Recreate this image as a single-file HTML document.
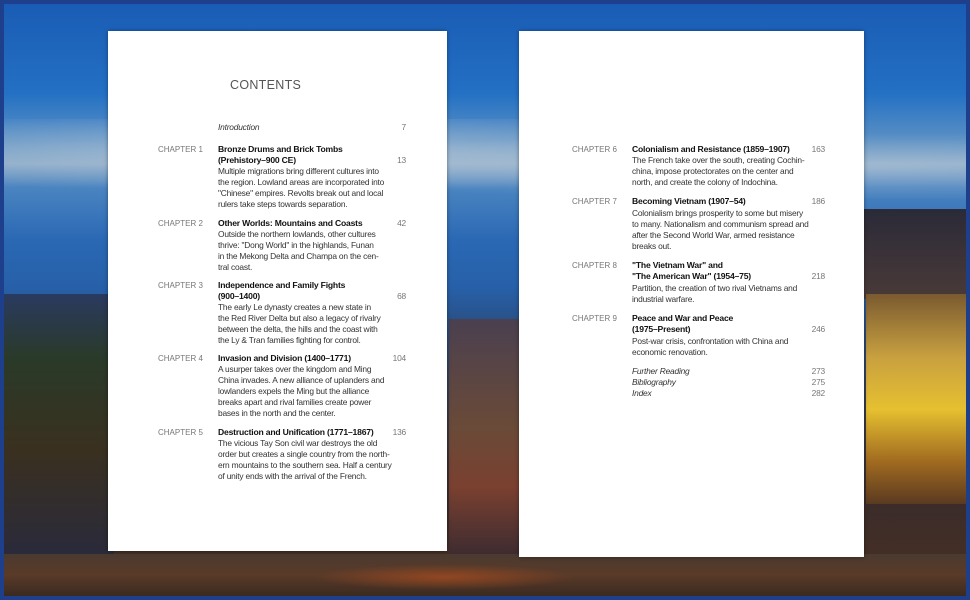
<!DOCTYPE html>
<html><head><meta charset="utf-8"><style>
*{margin:0;padding:0;box-sizing:border-box}
body{width:970px;height:600px;overflow:hidden;position:relative;background:#1d3f8c;font-family:"Liberation Sans",sans-serif}
.bg{position:absolute;left:4px;top:4px;width:962px;height:592px;overflow:hidden;
background:linear-gradient(180deg,#1a5cb5 0%,#2370c4 15%,#5a90c4 23%,#86a8c8 27%,#4a84c0 31%,#2a68b4 40%,#2760a8 48%,#2a4a7a 56%,#3a3a48 70%,#3b2c2a 85%,#4a3020 100%)}
.b{position:absolute}
.page{position:absolute;background:#fff;box-shadow:0 0 4px rgba(0,0,0,.4)}
.t{position:absolute;white-space:nowrap;font-size:8.4px;line-height:11px;color:#333;letter-spacing:-0.2px}
.c{color:#777;font-size:8px;letter-spacing:0}
.h{font-weight:bold;color:#111;font-size:8.6px}
.n{color:#777;text-align:right;width:30px}
i{font-style:italic}
</style></head><body>
<div class="bg">
 <div class="b" style="left:0;top:115px;width:962px;height:80px;background:radial-gradient(ellipse at 30% 40%,rgba(210,215,220,.5),transparent 60%),radial-gradient(ellipse at 90% 60%,rgba(200,210,220,.4),transparent 50%)"></div>
 <div class="b" style="left:860px;top:205px;width:102px;height:90px;background:linear-gradient(180deg,#2a2a38,#4a3a38)"></div>
 <div class="b" style="left:862px;top:290px;width:100px;height:210px;background:linear-gradient(180deg,#7a5a30,#c8a040 30%,#e6c030 55%,#a06a20 80%,#5a3a20)"></div>
 <div class="b" style="left:0;top:290px;width:110px;height:260px;background:linear-gradient(180deg,#2a3a60,#2a3a28 25%,#3a3020 60%,#2a2a3a)"></div>
 <div class="b" style="left:445px;top:315px;width:75px;height:240px;background:linear-gradient(180deg,#4a4050,#6a4a38 45%,#7a4030 70%,#3a2a30)"></div>
 <div class="b" style="left:0;top:550px;width:962px;height:42px;background:linear-gradient(180deg,#4a3a30,#5a3a28 50%,#3a2a20)"></div>
 <div class="b" style="left:310px;top:560px;width:260px;height:26px;background:radial-gradient(ellipse,#a04a20,transparent 70%);opacity:.8"></div>
</div>

<div class="page" style="left:108px;top:31px;width:339px;height:520px">
 <div class="t" style="left:122px;top:47px;font-size:12.5px;color:#555;letter-spacing:0.3px;line-height:14px">CONTENTS</div>
 <div class="t" style="left:110px;top:91px"><i>Introduction</i></div><div class="t n" style="left:268px;top:91px">7</div>

 <div class="t c" style="left:50px;top:113px">CHAPTER 1</div>
 <div class="t h" style="left:110px;top:113px">Bronze Drums and Brick Tombs</div>
 <div class="t h" style="left:110px;top:124px">(Prehistory–900 CE)</div><div class="t n" style="left:268px;top:124px">13</div>
 <div class="t" style="left:110px;top:135px">Multiple migrations bring different cultures into</div>
 <div class="t" style="left:110px;top:146px">the region. Lowland areas are incorporated into</div>
 <div class="t" style="left:110px;top:157px">"Chinese" empires. Revolts break out and local</div>
 <div class="t" style="left:110px;top:168px">rulers take steps towards separation.</div>

 <div class="t c" style="left:50px;top:187px">CHAPTER 2</div>
 <div class="t h" style="left:110px;top:187px">Other Worlds: Mountains and Coasts</div><div class="t n" style="left:268px;top:187px">42</div>
 <div class="t" style="left:110px;top:198px">Outside the northern lowlands, other cultures</div>
 <div class="t" style="left:110px;top:209px">thrive: "Dong World" in the highlands, Funan</div>
 <div class="t" style="left:110px;top:220px">in the Mekong Delta and Champa on the cen-</div>
 <div class="t" style="left:110px;top:231px">tral coast.</div>

 <div class="t c" style="left:50px;top:249px">CHAPTER 3</div>
 <div class="t h" style="left:110px;top:249px">Independence and Family Fights</div>
 <div class="t h" style="left:110px;top:260px">(900–1400)</div><div class="t n" style="left:268px;top:260px">68</div>
 <div class="t" style="left:110px;top:271px">The early Le dynasty creates a new state in</div>
 <div class="t" style="left:110px;top:282px">the Red River Delta but also a legacy of rivalry</div>
 <div class="t" style="left:110px;top:293px">between the delta, the hills and the coast with</div>
 <div class="t" style="left:110px;top:304px">the Ly &amp; Tran families fighting for control.</div>

 <div class="t c" style="left:50px;top:322px">CHAPTER 4</div>
 <div class="t h" style="left:110px;top:322px">Invasion and Division (1400–1771)</div><div class="t n" style="left:268px;top:322px">104</div>
 <div class="t" style="left:110px;top:333px">A usurper takes over the kingdom and Ming</div>
 <div class="t" style="left:110px;top:344px">China invades. A new alliance of uplanders and</div>
 <div class="t" style="left:110px;top:355px">lowlanders expels the Ming but the alliance</div>
 <div class="t" style="left:110px;top:366px">breaks apart and rival families create power</div>
 <div class="t" style="left:110px;top:377px">bases in the north and the center.</div>

 <div class="t c" style="left:50px;top:396px">CHAPTER 5</div>
 <div class="t h" style="left:110px;top:396px">Destruction and Unification (1771–1867)</div><div class="t n" style="left:268px;top:396px">136</div>
 <div class="t" style="left:110px;top:407px">The vicious Tay Son civil war destroys the old</div>
 <div class="t" style="left:110px;top:418px">order but creates a single country from the north-</div>
 <div class="t" style="left:110px;top:429px">ern mountains to the southern sea. Half a century</div>
 <div class="t" style="left:110px;top:440px">of unity ends with the arrival of the French.</div>
</div>

<div class="page" style="left:519px;top:31px;width:345px;height:526px">
 <div class="t c" style="left:53px;top:113px">CHAPTER 6</div>
 <div class="t h" style="left:113px;top:113px">Colonialism and Resistance (1859–1907)</div><div class="t n" style="left:276px;top:113px">163</div>
 <div class="t" style="left:113px;top:124px">The French take over the south, creating Cochin-</div>
 <div class="t" style="left:113px;top:135px">china, impose protectorates on the center and</div>
 <div class="t" style="left:113px;top:146px">north, and create the colony of Indochina.</div>

 <div class="t c" style="left:53px;top:165px">CHAPTER 7</div>
 <div class="t h" style="left:113px;top:165px">Becoming Vietnam (1907–54)</div><div class="t n" style="left:276px;top:165px">186</div>
 <div class="t" style="left:113px;top:177px">Colonialism brings prosperity to some but misery</div>
 <div class="t" style="left:113px;top:188px">to many. Nationalism and communism spread and</div>
 <div class="t" style="left:113px;top:199px">after the Second World War, armed resistance</div>
 <div class="t" style="left:113px;top:210px">breaks out.</div>

 <div class="t c" style="left:53px;top:229px">CHAPTER 8</div>
 <div class="t h" style="left:113px;top:229px">"The Vietnam War" and</div>
 <div class="t h" style="left:113px;top:240px">"The American War" (1954–75)</div><div class="t n" style="left:276px;top:240px">218</div>
 <div class="t" style="left:113px;top:252px">Partition, the creation of two rival Vietnams and</div>
 <div class="t" style="left:113px;top:263px">industrial warfare.</div>

 <div class="t c" style="left:53px;top:282px">CHAPTER 9</div>
 <div class="t h" style="left:113px;top:282px">Peace and War and Peace</div>
 <div class="t h" style="left:113px;top:293px">(1975–Present)</div><div class="t n" style="left:276px;top:293px">246</div>
 <div class="t" style="left:113px;top:305px">Post-war crisis, confrontation with China and</div>
 <div class="t" style="left:113px;top:316px">economic renovation.</div>

 <div class="t" style="left:113px;top:335px"><i>Further Reading</i></div><div class="t n" style="left:276px;top:335px">273</div>
 <div class="t" style="left:113px;top:346px"><i>Bibliography</i></div><div class="t n" style="left:276px;top:346px">275</div>
 <div class="t" style="left:113px;top:357px"><i>Index</i></div><div class="t n" style="left:276px;top:357px">282</div>
</div>
</body></html>
